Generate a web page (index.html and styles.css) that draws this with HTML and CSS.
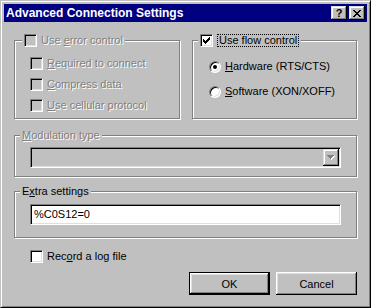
FILE: index.html
```html
<!DOCTYPE html>
<html>
<head>
    <title>Advanced Connection Settings</title>
    <link rel="stylesheet" href="styles.css">
</head>
<body>
    <div class="window">
        <div class="titlebar">
            <span class="title">Advanced Connection Settings</span>
            <div class="title-buttons">
                <span class="tbtn help">?</span>
                <span class="tbtn">
                    <svg width="8" height="7" viewBox="0 0 8 7" shape-rendering="crispEdges"><path d="M0 0h2v1H0zM6 0h2v1H6zM1 1h2v1H1zM5 1h2v1H5zM2 2h4v1H2zM3 3h2v1H3zM2 4h4v1H2zM1 5h2v1H1zM5 5h2v1H5zM0 6h2v1H0zM6 6h2v1H6z" fill="#000"/></svg>
                </span>
            </div>
        </div>

        <div class="client">
            <div class="top-row">
                <fieldset class="group">
                    <legend class="legend-left">
                        <span class="option disabled">
                            <span class="check"></span>
                            <span class="label">Use <u>e</u>rror control</span>
                        </span>
                    </legend>
                    <div class="group-body error-body">
                        <div class="option disabled">
                            <span class="check"></span>
                            <span class="label"><u>R</u>equired to connect</span>
                        </div>
                        <div class="option disabled">
                            <span class="check"></span>
                            <span class="label"><u>C</u>ompress data</span>
                        </div>
                        <div class="option disabled">
                            <span class="check"></span>
                            <span class="label"><u>U</u>se cellular protocol</span>
                        </div>
                    </div>
                </fieldset>

                <fieldset class="group">
                    <legend class="legend-right">
                        <span class="option">
                            <span class="check checked">
                                <svg width="7" height="7" viewBox="0 0 7 7" shape-rendering="crispEdges"><path d="M0 2h1v3H0zM1 3h1v3H1zM2 4h1v3H2zM3 3h1v3H3zM4 2h1v3H4zM5 1h1v3H5zM6 0h1v3H6z" fill="#000"/></svg>
                            </span>
                            <span class="label focus">Use flow control</span>
                        </span>
                    </legend>
                    <div class="group-body flow-body">
                        <div class="option">
                            <span class="radio selected"></span>
                            <span class="label"><u>H</u>ardware (RTS/CTS)</span>
                        </div>
                        <div class="option">
                            <span class="radio"></span>
                            <span class="label"><u>S</u>oftware (XON/XOFF)</span>
                        </div>
                    </div>
                </fieldset>
            </div>

            <fieldset class="group wide">
                <legend class="legend-text disabled"><u>M</u>odulation type</legend>
                <div class="group-body modulation-body">
                    <div class="combo">
                        <span class="combo-btn">
                            <svg width="8" height="5" viewBox="0 0 8 5" shape-rendering="crispEdges">
                                <path d="M1 1h7v1H1zM2 2h5v1H2zM3 3h3v1H3zM4 4h1v1H4z" fill="#fff"/>
                                <path d="M0 0h7v1H0zM1 1h5v1H1zM2 2h3v1H2zM3 3h1v1H3z" fill="#808080"/>
                            </svg>
                        </span>
                    </div>
                </div>
            </fieldset>

            <fieldset class="group wide extra">
                <legend class="legend-text">E<u>x</u>tra settings</legend>
                <div class="group-body extra-body">
                    <div class="textbox">%C0S12=0</div>
                </div>
            </fieldset>

            <div class="option log-row">
                <span class="check"></span>
                <span class="label">Rec<u>o</u>rd a log file</span>
            </div>

            <div class="button-row">
                <span class="btn default">OK</span>
                <span class="btn">Cancel</span>
            </div>
        </div>
    </div>
</body>
</html>
```

FILE: styles.css
```css
body {
    margin: 0;
    font-family: "Liberation Sans", Arial, sans-serif;
    font-size: 11px;
    background: #c0c0c0;
    color: #000;
}
.window {
    width: 371px;
    height: 308px;
    box-sizing: border-box;
    background: #c0c0c0;
    border: 1px solid;
    border-color: #c0c0c0 #000 #000 #c0c0c0;
    box-shadow: inset 1px 1px #fff, inset -1px -1px #808080;
    padding: 3px;
}
.titlebar {
    height: 18px;
    display: flex;
    align-items: center;
    justify-content: space-between;
    background: #000080;
    color: #fff;
    padding-left: 2px;
}
.title {
    font-size: 12px;
    font-weight: bold;
    line-height: 18px;
}
.title-buttons {
    display: flex;
    gap: 2px;
    margin-right: 2px;
}
.tbtn {
    width: 16px;
    height: 14px;
    box-sizing: border-box;
    display: flex;
    align-items: center;
    justify-content: center;
    background: #c0c0c0;
    color: #000;
    box-shadow: inset -1px -1px #000, inset 1px 1px #dfdfdf, inset -2px -2px #808080, inset 2px 2px #fff;
}
.help {
    font-weight: bold;
    font-size: 11px;
    line-height: 14px;
}
.client {
    padding: 12px 10px 0 10px;
}
.top-row {
    display: grid;
    grid-template-columns: 166px 1fr;
    gap: 12px;
    margin-bottom: 10px;
}
.group {
    margin: 0;
    padding: 0;
    min-width: 0;
    border: 1px solid #808080;
    box-shadow: inset 1px 1px #fff, 1px 1px #fff;
}
.group legend {
    padding: 0 2px;
    background: #c0c0c0;
}
.legend-left {
    margin-left: 7px;
}
.legend-right {
    margin-left: 5px;
}
.legend-text {
    margin-left: 5px;
    line-height: 13px;
    height: 13px;
}
.option {
    display: flex;
    align-items: center;
    gap: 4px;
    height: 13px;
    line-height: 13px;
    white-space: nowrap;
}
.disabled {
    color: #808080;
    text-shadow: 1px 1px 0 #fff;
}
.check {
    width: 13px;
    height: 13px;
    box-sizing: border-box;
    flex: none;
    display: flex;
    align-items: center;
    justify-content: center;
    background: #fff;
    border: 1px solid;
    border-color: #808080 #fff #fff #808080;
    box-shadow: inset 1px 1px #000, inset -1px -1px #dfdfdf;
}
.disabled .check {
    background: #c0c0c0;
}
.radio {
    width: 12px;
    height: 12px;
    box-sizing: border-box;
    flex: none;
    display: flex;
    align-items: center;
    justify-content: center;
    border-radius: 50%;
    background: #fff;
    border: 1px solid;
    border-color: #808080 #fff #fff #808080;
    box-shadow: inset 1px 1px #000, inset -1px -1px #dfdfdf;
}
.radio.selected::after {
    content: "";
    width: 4px;
    height: 4px;
    border-radius: 50%;
    background: #000;
}
.focus {
    border: 1px dotted #000;
    padding: 0 1px;
    line-height: 11px;
}
.group-body {
    display: flex;
    flex-direction: column;
}
.error-body {
    padding: 10px 0 6px 15px;
    gap: 8px;
}
.flow-body {
    padding: 13px 0 0 16px;
    gap: 12px;
}
.modulation-body {
    padding: 5px 15px 8px 15px;
}
.extra {
    margin-top: 8px;
}
.extra-body {
    padding: 6px 15px 12px 15px;
}
.combo,
.textbox {
    height: 21px;
    box-sizing: border-box;
    border: 1px solid;
    border-color: #808080 #fff #fff #808080;
    box-shadow: inset 1px 1px #000, inset -1px -1px #dfdfdf;
}
.combo {
    display: flex;
    justify-content: flex-end;
    padding: 1px;
    background: #c0c0c0;
}
.combo-btn {
    width: 16px;
    height: 17px;
    display: flex;
    align-items: center;
    justify-content: center;
    box-shadow: inset -1px -1px #000, inset 1px 1px #dfdfdf, inset -2px -2px #808080, inset 2px 2px #fff;
}
.textbox {
    background: #fff;
    padding: 0 3px;
    line-height: 19px;
}
.log-row {
    margin: 12px 0 0 16px;
}
.button-row {
    display: flex;
    justify-content: flex-end;
    gap: 6px;
    margin-top: 9px;
}
.btn {
    width: 81px;
    height: 23px;
    box-sizing: border-box;
    display: flex;
    align-items: center;
    justify-content: center;
    background: #c0c0c0;
    box-shadow: inset -1px -1px #000, inset 1px 1px #fff, inset -2px -2px #808080, inset 2px 2px #dfdfdf;
}
.btn.default {
    border: 1px solid #000;
}
```
